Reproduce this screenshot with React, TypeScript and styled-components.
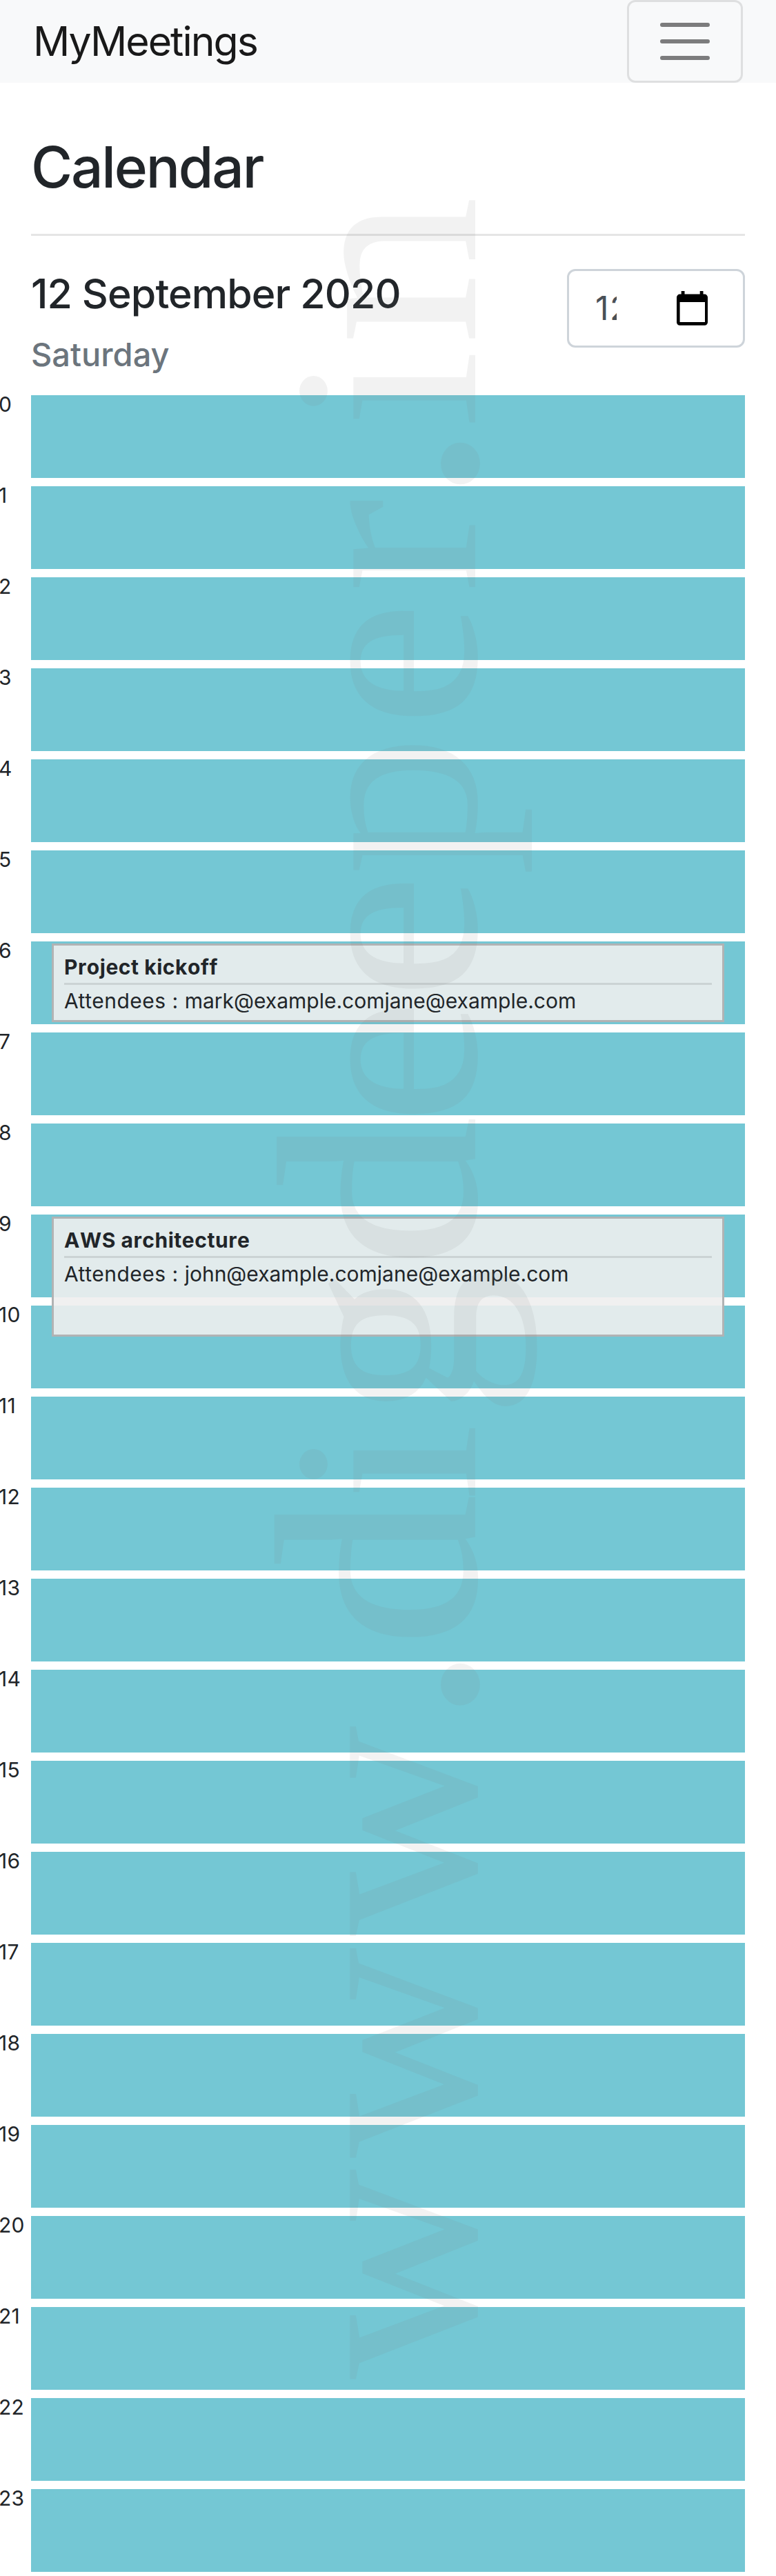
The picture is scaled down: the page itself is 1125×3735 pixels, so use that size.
import React from "react";
import styled, { createGlobalStyle } from "styled-components";

const GlobalStyle = createGlobalStyle`
  *, *::before, *::after { box-sizing: border-box; }
  body {
    margin: 0;
    background: #fff;
    color: #212529;
    font-family: Inter, "Liberation Sans", sans-serif;
    overflow-x: hidden;
  }
`;

const Page = styled.div`
  position: relative;
  width: 1125px;
  height: 3735px;
  overflow: hidden;
`;

const Navbar = styled.header`
  display: flex;
  align-items: center;
  justify-content: space-between;
  height: 120px;
  padding: 0 48px;
  background: #f8f9fa;
`;

const Brand = styled.a`
  font-size: 59px;
  line-height: 120px;
  letter-spacing: -2px;
  color: rgba(0, 0, 0, 0.9);
`;

const Toggler = styled.button`
  display: flex;
  align-items: center;
  justify-content: center;
  width: 168px;
  height: 120px;
  padding: 0;
  background: transparent;
  border: 3px solid rgba(0, 0, 0, 0.1);
  border-radius: 12px;
`;

const Intro = styled.section`
  padding: 73px 45px 0;
`;

const Heading = styled.h1`
  margin: 0;
  font-size: 82px;
  line-height: 100px;
  font-weight: 500;
  letter-spacing: -2.2px;
`;

const Divider = styled.hr<{ $top: number }>`
  height: 3px;
  margin: ${(p) => p.$top}px 0 0;
  border: 0;
  background: rgba(0, 0, 0, 0.1);
`;

const DayBar = styled.div`
  display: flex;
  justify-content: space-between;
  align-items: flex-start;
  height: 183px;
  margin-top: 48px;
`;

const DayTitle = styled.h2`
  margin: 0 0 23px;
  font-size: 59px;
  line-height: 72px;
  font-weight: 500;
  letter-spacing: -0.9px;
`;

const Weekday = styled.h3`
  margin: 0;
  font-size: 47px;
  line-height: 58px;
  font-weight: 500;
  color: #6c757d;
`;

const DateField = styled.div`
  display: flex;
  align-items: center;
  justify-content: space-between;
  width: 258px;
  height: 114px;
  padding: 0 51px 0 36px;
  background: #fff;
  border: 3px solid #ced4da;
  border-radius: 12px;
`;

const DateValue = styled.span`
  width: 33px;
  overflow: hidden;
  white-space: nowrap;
  font-size: 48px;
  line-height: 72px;
  text-indent: 2px;
  letter-spacing: 1.5px;
  color: #495057;
`;

const Hours = styled.main`
  display: grid;
  grid-auto-rows: 120px;
  row-gap: 12px;
`;

const HourRow = styled.div`
  display: grid;
  grid-template-columns: 45px 1035px;
`;

const HourLabel = styled.span`
  margin-left: -2px;
  font-size: 30px;
  line-height: 26px;
  letter-spacing: 0.2px;
`;

const Slot = styled.div`
  position: relative;
  background: #74c7d4;
`;

const Meeting = styled.article<{ $height: number }>`
  position: absolute;
  z-index: 1;
  top: 3px;
  left: 30px;
  width: 975px;
  height: ${(p) => p.$height}px;
  padding: 12px 15px;
  background: rgba(238, 238, 238, 0.9);
  border: 3px solid #b1b3b4;
`;

const MeetingTitle = styled.h4`
  margin: 0;
  font-size: 30px;
  line-height: 38px;
  font-weight: 700;
  font-kerning: none;
  letter-spacing: 0.55px;
`;

const Attendees = styled.p`
  margin: 3px 0 0;
  font-size: 30px;
  line-height: 40px;
  letter-spacing: 0.5px;
  white-space: nowrap;
`;

const Emails = styled.span`
  letter-spacing: 0;
`;

const Watermark = styled.svg`
  position: absolute;
  inset: 0;
  z-index: 2;
  pointer-events: none;

  text {
    font-family: "Liberation Serif", serif;
    font-size: 385px;
    text-anchor: middle;
    fill: rgba(128, 128, 128, 0.1);
  }
`;

const Glyphs = styled.tspan<{ $size: number }>`
  font-size: ${(p) => p.$size}px;
`;

interface MeetingInfo {
  title: string;
  emails: string[];
  height: number;
}

const meetings: Record<number, MeetingInfo> = {
  6: { title: "Project kickoff", emails: ["mark@example.com", "jane@example.com"], height: 114 },
  9: { title: "AWS architecture", emails: ["john@example.com", "jane@example.com"], height: 174 },
};

const STRETCH = 1.07;
const letterCentres = [
  156, 477, 798.5, 1010.6, 1175.5, 1333, 1506, 1724.5, 1913, 2095, 2285.5, 2490, 2662, 2781, 2889, 3061,
];

const MenuIcon = () => (
  <svg width="90" height="90" viewBox="0 0 30 30" fill="none">
    <path d="M4 7h22M4 15h22M4 23h22" stroke="rgba(0,0,0,0.5)" strokeWidth="2" strokeLinecap="round" />
  </svg>
);

const CalendarIcon = () => (
  <svg width="45" height="50" viewBox="0 0 45 50">
    <path
      fillRule="evenodd"
      d="M6.7 0h4.8v4.6h22.2V0h4.8v4.6h2a4.5 4.5 0 0 1 4.5 4.5v36.2a4.5 4.5 0 0 1-4.5 4.5h-36A4.5 4.5 0 0 1 0 45.300V9.100a4.500 4.500 0 0 1 4.500-4.500h2.200zM4.600 16v29h36.400V16z"
    />
  </svg>
);

export default function App() {
  return (
    <Page>
      <GlobalStyle />
      <Navbar>
        <Brand>MyMeetings</Brand>
        <Toggler aria-label="Toggle navigation">
          <MenuIcon />
        </Toggler>
      </Navbar>
      <Intro>
        <Heading>Calendar</Heading>
        <Divider $top={46} />
        <DayBar>
          <div>
            <DayTitle>12 September 2020</DayTitle>
            <Weekday>Saturday</Weekday>
          </div>
          <DateField>
            <DateValue>12</DateValue>
            <CalendarIcon />
          </DateField>
        </DayBar>
      </Intro>
      <Hours>
        {Array.from({ length: 24 }, (_, hour) => {
          const meeting = meetings[hour];
          return (
            <HourRow key={hour}>
              <HourLabel>{hour}</HourLabel>
              <Slot>
                {meeting && (
                  <Meeting $height={meeting.height}>
                    <MeetingTitle>{meeting.title}</MeetingTitle>
                    <Divider $top={4} />
                    <Attendees>
                      Attendees : <Emails>{meeting.emails.join("")}</Emails>
                    </Attendees>
                  </Meeting>
                )}
              </Slot>
            </HourRow>
          );
        })}
      </Hours>
      <Watermark width="1125" height="3735" viewBox="0 0 1125 3735">
        <text
          transform={`translate(689 3453) rotate(-90) scale(${STRETCH} 1)`}
          x={letterCentres.map((c) => (c / STRETCH).toFixed(1)).join(" ")}
        >
          <Glyphs $size={396}>www</Glyphs>
          <Glyphs $size={480}>.</Glyphs>
          <Glyphs $size={420}>d</Glyphs>i
          <Glyphs $size={415}>gd</Glyphs>eeper
          <Glyphs $size={480}>.</Glyphs>i
          <Glyphs $size={405}>n</Glyphs>
        </text>
      </Watermark>
    </Page>
  );
}
